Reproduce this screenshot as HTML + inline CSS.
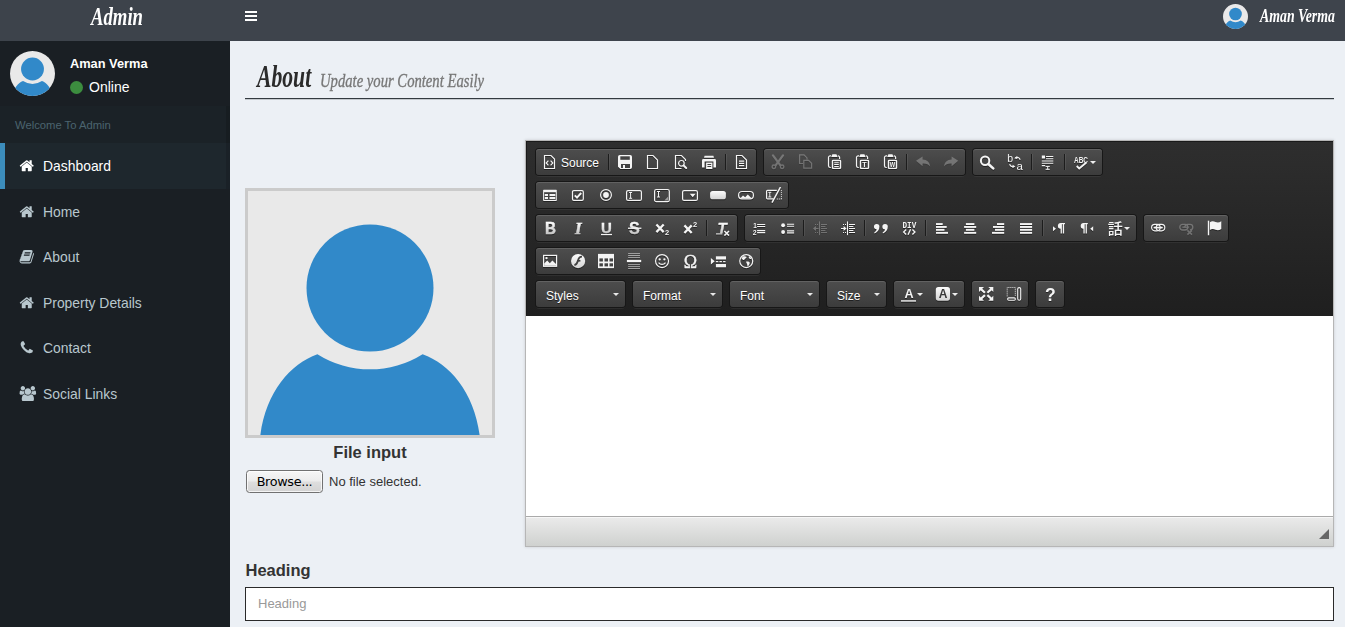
<!DOCTYPE html>
<html lang="en"><head><meta charset="utf-8"><title>Admin | About</title>
<style>
*{box-sizing:border-box}
html,body{margin:0;padding:0}
body{width:1345px;height:627px;overflow:hidden;background:#ecf0f5;font-family:"Liberation Sans",sans-serif;position:relative;color:#333}
.abs{position:absolute}
#hdr{left:0;top:0;width:1345px;height:41px;background:#3e444c}
#logo{left:0;top:0;width:230px;height:41px;background:#3d434b;color:#fff}
.script{font-family:"Liberation Serif","DejaVu Serif",serif;font-style:italic;font-weight:bold;white-space:nowrap;transform-origin:0 100%;display:inline-block;line-height:1}
#side{left:0;top:41px;width:230px;height:586px;background:#1a1f24}
#welcome{left:0;top:106px;width:230px;height:37px;background:#1b2227;color:#4b646f;font-size:11.250px;padding:13px 0 0 15px}
.mi{position:absolute;left:0;width:230px;height:46px;color:#b8c7ce;font-size:13.900px;line-height:46px;padding-left:43px;white-space:nowrap}
.mi.act{background:#1e272d;color:#fff;border-left:5px solid #3c8dbc;padding-left:38px}
.mi .fa{position:absolute;left:19.200px;top:14.800px}
.mi.act .fa{left:14.200px}
#uname{left:70px;top:56px;color:#fff;font-weight:bold;font-size:12.800px;white-space:nowrap}
#online{left:89px;top:79px;color:#fff;font-size:14px;white-space:nowrap}
#dot{left:70px;top:81px;width:13px;height:13px;border-radius:50%;background:#3c8d3f}
#hline{left:245px;top:98px;width:1089px;height:1px;background:#333a40;box-shadow:0 1px 0 rgba(51,58,64,.22)}
#imgbox{left:245px;top:188px;width:250px;height:250px;border:3px solid #cbcbcb;background:#e9e9e9;overflow:hidden}
#filelbl{left:245px;top:443px;width:250px;text-align:center;font-weight:bold;font-size:16.500px;color:#333;white-space:nowrap}
#browse{left:246px;top:470px;width:77px;height:23px;border:1px solid #717171;border-radius:3.500px;background:linear-gradient(#f6f6f6,#ececec 47%,#dedede 53%,#d3d3d3);box-shadow:inset 0 0 0 1px rgba(255,255,255,.75);font-family:"DejaVu Sans","Liberation Sans",sans-serif;font-size:12.800px;color:#000;text-align:center;line-height:22.500px;letter-spacing:-.35px}
#nofile{left:329px;top:474px;font-size:13px;color:#333;white-space:nowrap}
#hlabel{left:245.500px;top:560.500px;font-weight:bold;font-size:16.500px;color:#333;white-space:nowrap}
#hinput{left:245px;top:587px;width:1089px;height:34px;border:1px solid #2a2a2a;background:#fff;color:#999;font-size:13px;line-height:32px;padding-left:12px}
#ed{left:525px;top:140px;width:809px;height:407px;border:1px solid #b6b6b6;background:#fff;box-shadow:0 0 3px rgba(0,0,0,.15)}
#tb{position:absolute;left:0;top:0;width:807px;height:175px;background:linear-gradient(#2e2e2e,#1f1f1f);box-shadow:inset 1px 1px 0 #1a1a1a}
#bot{position:absolute;left:0;top:375px;width:807px;height:30px;border-top:1px solid #aaa;background:linear-gradient(#ebebeb,#cfd1cf);box-shadow:inset 0 1px 0 rgba(255,255,255,.6)}
#rs{position:absolute;right:4px;bottom:7px;width:0;height:0;border-style:solid;border-width:0 0 10px 10px;border-color:transparent transparent #666 transparent}
.g{position:absolute;height:26px;background:linear-gradient(#4d4d4d,#3c3c3c);border-radius:3px;box-shadow:0 0 0 1px #171717,0 2px 0 0 rgba(255,255,255,.06), inset 0 1px 0 rgba(255,255,255,.12);white-space:nowrap;font-size:0;display:flex}
.b{display:inline-block;width:28px;height:26px;padding:5px 6px;position:relative;flex:none}
.b.lbl{width:70px}
.b.arr{width:35px}
.b .t{position:absolute;left:25px;top:6px;font:12px/16px "Liberation Sans",sans-serif;color:#fff;text-shadow:0 1px 0 rgba(0,0,0,.5)}
.ic{display:block;filter:drop-shadow(0 1px 0 rgba(0,0,0,.45))}
.sep{display:inline-block;width:1px;height:16px;margin:5px 2px 0;background:#1c1c1c;box-shadow:1px 0 0 rgba(255,255,255,.08);flex:none}
.ar{position:absolute;width:0;height:0;border:3px solid transparent;border-top-color:#eee;right:6px;top:12px}
.combo .ct{position:absolute;left:10px;top:7px;font:12px/16px "Liberation Sans",sans-serif;color:#fff;text-shadow:0 1px 0 rgba(0,0,0,.5)}
.combo .ar{right:6px;top:11.500px;border-width:3.500px;border-top-color:#e8e8e8}
</style></head><body>
<svg width="0" height="0" style="position:absolute"><defs><linearGradient id="bg1" x1="0" y1="0" x2="0" y2="1"><stop offset="0" stop-color="#fcfcfc"/><stop offset="1" stop-color="#d4d4d4"/></linearGradient><linearGradient id="bg2" gradientUnits="userSpaceOnUse" x1="0" y1="2" x2="0" y2="14"><stop offset="0" stop-color="#ffffff"/><stop offset="1" stop-color="#c4c4c4"/></linearGradient></defs></svg>
<div id="hdr" class="abs"></div>
<div id="logo" class="abs"><span class="script abs" id="logot" style="left:91px;top:4.200px;font-size:26px;color:#fff;transform:scaleX(.72)">Admin</span></div>
<svg class="abs" style="left:245px;top:11px" width="12" height="10" viewBox="0 0 12 10" shape-rendering="crispEdges"><path d="M0 1h12M0 5h12M0 9h12" stroke="#fff" stroke-width="2"/></svg>
<div class="abs" style="left:1223px;top:4px;width:25px;height:25px"><svg class="" width="25" height="25" viewBox="0 0 250 250"><defs><clipPath id="c25"><circle cx="125" cy="125" r="125"/></clipPath></defs><g clip-path="url(#c25)"><rect width="250" height="250" fill="#e9e9e9"/><circle cx="125" cy="100" r="63.500" fill="#3189c9"/><path d="M15 250C20 205 45 176 72.400 166.200A98.800 98.800 0 0 0 177.600 166.200C205 176 230 205 235 250z" fill="#3189c9"/></g></svg></div>
<span class="script abs" id="topname" style="left:1259.500px;top:7px;font-size:18.800px;color:#fff;transform:scaleX(.736)">Aman Verma</span>

<div id="side" class="abs"></div>
<div class="abs" style="left:10px;top:51px;width:45px;height:45px"><svg class="" width="45" height="45" viewBox="0 0 250 250"><defs><clipPath id="c45"><circle cx="125" cy="125" r="125"/></clipPath></defs><g clip-path="url(#c45)"><rect width="250" height="250" fill="#e9e9e9"/><circle cx="125" cy="100" r="63.500" fill="#3189c9"/><path d="M15 250C20 205 45 176 72.400 166.200A98.800 98.800 0 0 0 177.600 166.200C205 176 230 205 235 250z" fill="#3189c9"/></g></svg></div>
<div id="uname" class="abs">Aman Verma</div>
<div id="dot" class="abs"></div>
<div id="online" class="abs">Online</div>
<div id="welcome" class="abs">Welcome To Admin</div>
<div class="mi act" style="top:143px"><svg class="fa" viewBox="0 0 1792 1792" width="15.50" height="15.5" fill="#fff"><path d="M1472 992v480q0 26-19 45t-45 19h-384v-384h-256v384h-384q-26 0-45-19t-19-45v-480q0-1 .5-3t.5-3l575-474 575 474q1 2 1 6zm223-69l-62 74q-8 9-21 11h-3q-13 0-21-7l-692-577-692 577q-12 8-24 7-13-2-21-11l-62-74q-8-10-7-23.500t11-21.500l719-599q32-26 76-26t76 26l244 204v-195q0-14 9-23t23-9h192q14 0 23 9t9 23v408l219 182q10 8 11 21.500t-7 23.500z"/></svg><span>Dashboard</span></div>
<div class="mi" style="top:189px"><svg class="fa" viewBox="0 0 1792 1792" width="15.50" height="15.5" fill="#b8c7ce"><path d="M1472 992v480q0 26-19 45t-45 19h-384v-384h-256v384h-384q-26 0-45-19t-19-45v-480q0-1 .5-3t.5-3l575-474 575 474q1 2 1 6zm223-69l-62 74q-8 9-21 11h-3q-13 0-21-7l-692-577-692 577q-12 8-24 7-13-2-21-11l-62-74q-8-10-7-23.500t11-21.500l719-599q32-26 76-26t76 26l244 204v-195q0-14 9-23t23-9h192q14 0 23 9t9 23v408l219 182q10 8 11 21.500t-7 23.500z"/></svg><span>Home</span></div>
<div class="mi" style="top:234px"><svg class="fa" viewBox="0 0 1792 1792" width="15.50" height="15.5" fill="#b8c7ce"><path d="M1703 478q40 57 18 129l-275 906q-19 64-76.500 107.500t-122.500 43.500h-923q-77 0-148.500-53.500t-99.500-131.500q-24-67-2-127 0-4 3-27t4-37q1-8-3-21.500t-3-19.500q2-11 8-21t16.500-23.500 16.500-23.500q23-38 45-91.500t30-91.500q3-10 .5-30t-.5-28q3-11 17-28t17-23q21-36 42-92t25-90q1-9-2.500-32t.5-28q4-13 22-30.500t22-22.500q19-26 42.500-84.500t27.500-96.500q1-8-3-25.500t-2-26.500q2-8 9-18t18-23 17-21q8-12 16.500-30.500t15-35 16-36 19.500-32 26.500-23.500 36-11.500 47.500 5.500l-1 3q38-9 51-9h761q74 0 114 56t18 130l-274 906q-36 119-71.500 153.500t-128.500 34.500h-869q-27 0-38 15-11 16-1 43 24 70 144 70h923q29 0 56-15.500t35-41.500l300-987q7-22 5-57 38 15 59 43zm-1064 2q-4 13 2 22.500t20 9.500h608q13 0 25.500-9.500t16.500-22.500l21-64q4-13-2-22.500t-20-9.500h-608q-13 0-25.500 9.500t-16.500 22.500zm-83 256q-4 13 2 22.500t20 9.500h608q13 0 25.500-9.500t16.500-22.500l21-64q4-13-2-22.500t-20-9.500h-608q-13 0-25.500 9.500t-16.500 22.500z"/></svg><span>About</span></div>
<div class="mi" style="top:280px"><svg class="fa" viewBox="0 0 1792 1792" width="15.50" height="15.5" fill="#b8c7ce"><path d="M1472 992v480q0 26-19 45t-45 19h-384v-384h-256v384h-384q-26 0-45-19t-19-45v-480q0-1 .5-3t.5-3l575-474 575 474q1 2 1 6zm223-69l-62 74q-8 9-21 11h-3q-13 0-21-7l-692-577-692 577q-12 8-24 7-13-2-21-11l-62-74q-8-10-7-23.500t11-21.500l719-599q32-26 76-26t76 26l244 204v-195q0-14 9-23t23-9h192q14 0 23 9t9 23v408l219 182q10 8 11 21.500t-7 23.500z"/></svg><span>Property Details</span></div>
<div class="mi" style="top:325px"><svg class="fa" viewBox="0 0 1792 1792" width="15.50" height="15.5" fill="#b8c7ce"><path d="M1600 1240q0 27-10 70.500t-21 68.500q-21 50-122 106-94 51-186 51-27 0-53-3.500t-57.500-12.500-47-14.500-55.500-20.500-49-18q-98-35-175-83-127-79-264-216t-216-264q-48-77-83-175-3-9-18-49t-20.500-55.500-14.500-47-12.500-57.500-3.500-53q0-92 51-186 56-101 106-122 25-11 68.500-21t70.500-10q14 0 21 3 18 6 53 76 11 19 30 54t35 63.500 31 53.500q3 4 17.500 25t21.500 35.500 7 28.500q0 20-28.500 50t-62 55-62 53-28.500 46q0 9 5 22.500t8.500 20.500 14 24 11.500 19q76 137 174 235t235 174q2 1 19 11.500t24 14 20.500 8.500 22.500 5q18 0 46-28.500t53-62 55-62 50-28.500q14 0 28.500 7t35.500 21.500 25 17.500q25 15 53.500 31t63.500 35 54 30q70 35 76 53 3 7 3 21z"/></svg><span>Contact</span></div>
<div class="mi" style="top:371px"><svg class="fa" viewBox="0 0 2048 1792" width="17.71" height="15.5" fill="#b8c7ce"><path d="M657 896q-162 5-265 128h-134q-82 0-138-40.500t-56-118.500q0-353 124-353 6 0 43.500 21t97.500 42.500 119 21.500q67 0 133-23-5 37-5 66 0 139 81 256zm1071 637q0 120-73 189.500t-194 69.500h-874q-121 0-194-69.500t-73-189.500q0-53 3.500-103.500t14-109 26.500-108.500 43-97.500 62-81 85.500-53.500 111.500-20q10 0 43 21.500t73 48 107 48 135 21.500 135-21.500 107-48 73-48 43-21.500q61 0 111.500 20t85.500 53.500 62 81 43 97.500 26.500 108.500 14 109 3.500 103.500zm-1024-1277q0 106-75 181t-181 75-181-75-75-181 75-181 181-75 181 75 75 181zm704 384q0 159-112.500 271.500t-271.500 112.500-271.500-112.500-112.500-271.500 112.500-271.500 271.500-112.500 271.500 112.500 112.500 271.500zm576 225q0 78-56 118.500t-138 40.500h-134q-103-123-265-128 81-117 81-256 0-29-5-66 66 23 133 23 59 0 119-21.500t97.500-42.500 43.500-21q124 0 124 353zm-128-609q0 106-75 181t-181 75-181-75-75-181 75-181 181-75 181 75 75 181z"/></svg><span>Social Links</span></div>
<div class="abs" style="left:226px;top:106px;width:4px;height:83px;background:rgba(0,0,0,.13)"></div>
<span class="script abs" id="ttl" style="left:257px;top:60px;font-size:32px;color:#2b2b2b;transform:scaleX(.677)">About</span>
<span class="script abs" id="sub" style="left:320px;top:70.700px;font-size:19.400px;color:#777;font-weight:normal;-webkit-text-stroke:.35px #777;transform:scaleX(.756)">Update your Content Easily</span>
<div id="hline" class="abs"></div>

<div id="imgbox" class="abs"><svg width="244" height="244" viewBox="3 3 244 244"><circle cx="125" cy="100" r="63.500" fill="#3189c9"/><path d="M15 250C20 205 45 176 72.400 166.200A98.800 98.800 0 0 0 177.600 166.200C205 176 230 205 235 250z" fill="#3189c9"/></svg></div>
<div id="filelbl" class="abs">File input</div>
<div id="browse" class="abs">Browse...</div>
<div id="nofile" class="abs">No file selected.</div>

<div id="ed" class="abs"><div id="tb">
<div class="g" style="left:10px;top:8px"><span class="b lbl"><svg class="ic" viewBox="0 0 16 16" width="16" height="16"><path d="M2.5 1.5h6.5l3.5 3.5v9.5h-10z" fill="none" stroke="#f4f4f4" stroke-width="1.15" stroke-linejoin="miter"/><path d="M6.400 6.600L4.200 9l2.200 2.400M8.600 6.600L10.800 9l-2.200 2.400" fill="none" stroke="#f4f4f4" stroke-width="1.200"/></svg><span class="t">Source</span></span><i class="sep"></i><span class="b"><svg class="ic" viewBox="0 0 16 16" width="16" height="16"><path d="M2.800 1h10.400a1.800 1.800 0 0 1 1.800 1.800v10.400a1.800 1.800 0 0 1-1.800 1.800H3.400L1 12.800V2.800A1.800 1.800 0 0 1 2.800 1z" fill="#f4f4f4"/><rect x="3.300" y="2.300" width="9.500" height="3.500" fill="#424242"/><rect x="4" y="10" width="9" height="4" fill="#424242"/><rect x="6" y="11" width="2" height="3" fill="#f4f4f4"/></svg></span><span class="b"><svg class="ic" viewBox="0 0 16 16" width="16" height="16"><path d="M2.5 1.5h5.5l4.5 4.5v8.5h-10z" fill="none" stroke="#f4f4f4" stroke-width="1.15" stroke-linejoin="miter"/></svg></span><span class="b"><svg class="ic" viewBox="0 0 16 16" width="16" height="16"><path d="M8.500 14.500H2.500V1.500h6l4 4V7" fill="none" stroke="#f4f4f4" stroke-width="1.150"/><circle cx="8.400" cy="9.300" r="2.800" fill="none" stroke="#f4f4f4" stroke-width="1.200"/><path d="M10.600 11.600l2.600 2.400" stroke="#f4f4f4" stroke-width="2" stroke-linecap="round"/></svg></span><span class="b"><svg class="ic" viewBox="0 0 16 16" width="16" height="16"><path d="M3.600 1.700h8.800l.6 2H3z" fill="#f4f4f4"/><path d="M2.400 5h11.200a1.400 1.400 0 0 1 1.400 1.400v7.100h-2.600V7.600H3.600v5.900H1V6.400A1.400 1.400 0 0 1 2.400 5z" fill="#f4f4f4"/><path d="M5.100 8.600h6.300V15H5.100z" fill="#f4f4f4"/><path d="M6.400 10.500h3.800M6.400 12.500h3.800" stroke="#424242" stroke-width="1"/></svg></span><i class="sep"></i><span class="b"><svg class="ic" viewBox="0 0 16 16" width="16" height="16"><path d="M2.5 1.5h5.5l4.5 4.5v8.5h-10z" fill="none" stroke="#f4f4f4" stroke-width="1.15" stroke-linejoin="miter"/><path d="M5 7.100h5.200M5 9.400h5.200M5 11.600h5.200" stroke="#f4f4f4" stroke-width="1.300"/></svg></span></div>
<div class="g" style="left:238px;top:8px"><span class="b"><svg class="ic" viewBox="0 0 16 16" width="16" height="16" style="opacity:.27"><path d="M3 1.400l7 9.400M13 1.400L6 10.800" stroke="#f4f4f4" stroke-width="2.200" stroke-linecap="round"/><circle cx="3.900" cy="12.800" r="1.800" fill="none" stroke="#f4f4f4" stroke-width="1.300"/><circle cx="12.100" cy="12.800" r="1.800" fill="none" stroke="#f4f4f4" stroke-width="1.300"/></svg></span><span class="b"><svg class="ic" viewBox="0 0 16 16" width="16" height="16" style="opacity:.27"><path d="M5 9.500H1.600V0.900h4.400l3 3v1.800" fill="none" stroke="#f4f4f4" stroke-width="1.200"/><path d="M5.800 6.300h4.800l3 3v4.900H5.800z" fill="none" stroke="#f4f4f4" stroke-width="1.200"/></svg></span><span class="b"><svg class="ic" viewBox="0 0 16 16" width="16" height="16"><path d="M5 1.900H4.200A1.700 1.700 0 0 0 2.500 3.600v8.200a1.700 1.700 0 0 0 1.700 1.700h.6M11.800 1.900h.3a1.500 1.500 0 0 1 1.500 1.500V5" fill="none" stroke="#f4f4f4" stroke-width="1.200"/><path d="M6.400 0.300h4l1.200 2.700H5.200z" fill="#f4f4f4"/><rect x="6.500" y="6.400" width="8" height="8" rx="0.600" fill="none" stroke="#f4f4f4" stroke-width="1.400"/><path d="M8.200 8.300h4.600M8.200 10.400h4.600M8.200 12.500h4.600" stroke="#f4f4f4" stroke-width="1.100"/></svg></span><span class="b"><svg class="ic" viewBox="0 0 16 16" width="16" height="16"><path d="M5 1.900H4.200A1.700 1.700 0 0 0 2.500 3.600v8.200a1.700 1.700 0 0 0 1.700 1.700h.6M11.800 1.900h.3a1.500 1.500 0 0 1 1.500 1.500V5" fill="none" stroke="#f4f4f4" stroke-width="1.200"/><path d="M6.400 0.300h4l1.200 2.700H5.200z" fill="#f4f4f4"/><rect x="6.500" y="6.400" width="8" height="8" rx="0.600" fill="none" stroke="#f4f4f4" stroke-width="1.400"/><text x="10.5" y="13.2" font-family="Liberation Sans, sans-serif" font-weight="bold" font-style="normal" font-size="7.2" text-anchor="middle" fill="#f4f4f4">T</text></svg></span><span class="b"><svg class="ic" viewBox="0 0 16 16" width="16" height="16"><path d="M5 1.900H4.200A1.700 1.700 0 0 0 2.500 3.600v8.200a1.700 1.700 0 0 0 1.700 1.700h.6M11.800 1.900h.3a1.500 1.500 0 0 1 1.500 1.500V5" fill="none" stroke="#f4f4f4" stroke-width="1.200"/><path d="M6.400 0.300h4l1.200 2.700H5.200z" fill="#f4f4f4"/><rect x="6.500" y="6.400" width="8" height="8" rx="0.600" fill="none" stroke="#f4f4f4" stroke-width="1.400"/><text x="10.5" y="13.1" font-family="Liberation Sans, sans-serif" font-weight="bold" font-style="normal" font-size="6.6" text-anchor="middle" fill="#f4f4f4" textLength="5.400" lengthAdjust="spacingAndGlyphs">W</text></svg></span><i class="sep"></i><span class="b"><svg class="ic" viewBox="0 0 16 16" width="16" height="16" style="opacity:.27"><path d="M1 6.800L7.600 2.600v2.800c4.400.2 7.200 2.600 7.600 7.200-1.600-2.400-4-3.400-7.600-3.200v2.800z" fill="#f4f4f4"/></svg></span><span class="b"><svg class="ic" viewBox="0 0 16 16" width="16" height="16" style="opacity:.27"><path d="M15.200 6.800L8.600 2.600v2.800c-4.400.2-7.200 2.600-7.600 7.200 1.600-2.400 4-3.400 7.600-3.200v2.800z" fill="#f4f4f4"/></svg></span></div>
<div class="g" style="left:447px;top:8px"><span class="b"><svg class="ic" viewBox="0 0 16 16" width="16" height="16"><circle cx="6.100" cy="6.700" r="4.200" fill="none" stroke="#f4f4f4" stroke-width="2"/><path d="M9.600 10.200l4.600 4.200" stroke="#f4f4f4" stroke-width="2.600" stroke-linecap="round"/></svg></span><span class="b"><svg class="ic" viewBox="0 0 16 16" width="16" height="16"><text x="3.2" y="8" font-family="Liberation Sans, sans-serif" font-weight="normal" font-style="normal" font-size="10.5" text-anchor="middle" fill="#f4f4f4">b</text><text x="12.8" y="15.7" font-family="Liberation Sans, sans-serif" font-weight="normal" font-style="normal" font-size="11.5" text-anchor="middle" fill="#f4f4f4">a</text><path d="M8.200 3.800c2.200-1 4.200-.2 5 2" fill="none" stroke="#f4f4f4" stroke-width="1.100"/><path d="M7.200 4.200l3-2.200.2 3z" fill="#f4f4f4"/><path d="M2.600 10.200c.6 2 2.400 2.800 4.400 2.400" fill="none" stroke="#f4f4f4" stroke-width="1.100"/><path d="M8.400 12.600l-2.800-1.800-.2 3.200z" fill="#f4f4f4"/></svg></span><i class="sep"></i><span class="b"><svg class="ic" viewBox="0 0 16 16" width="16" height="16"><rect x="1.800" y="1.500" width="3.200" height="3" fill="#f4f4f4"/><path d="M6 2.500h7.300M6 4.800h7.300M1.800 7h11.500M1.800 9.300h11.500M1.800 11.600h3.400" stroke="#f4f4f4" stroke-width="1.100"/><path d="M5.600 12.400h4.200M5.600 15.300h4.200M7.700 12.400v3" stroke="#f4f4f4" stroke-width="1"/></svg></span><i class="sep"></i><span class="b arr"><svg class="ic" viewBox="0 0 16 16" width="16" height="16"><text x="1" y="9" font-family="Liberation Sans, sans-serif" font-weight="bold" font-size="9.500" textLength="14" lengthAdjust="spacingAndGlyphs" fill="#f4f4f4">ABC</text><path d="M3.700 12l2.500 2.500 7.200-6" fill="none" stroke="#f4f4f4" stroke-width="1.800"/></svg><i class="ar"></i></span></div>
<div class="g" style="left:10px;top:41px"><span class="b"><svg class="ic" viewBox="0 0 16 16" width="16" height="16"><rect x="1.100" y="2.800" width="13.700" height="11.100" rx="0.600" fill="#f4f4f4"/><rect x="2.100" y="5.200" width="11.700" height="7.700" fill="#424242"/><path d="M2.800 8h3.200M7.500 8h5.800M2.800 11h3.200M7.500 11h5.800" stroke="#f4f4f4" stroke-width="2"/></svg></span><span class="b"><svg class="ic" viewBox="0 0 16 16" width="16" height="16"><rect x="2.500" y="3.600" width="10.800" height="9.800" rx="1.300" fill="none" stroke="#f4f4f4" stroke-width="1.200"/><path d="M4.800 8.400l2.200 2.200 4.200-4.600" fill="none" stroke="#f4f4f4" stroke-width="2"/></svg></span><span class="b"><svg class="ic" viewBox="0 0 16 16" width="16" height="16"><circle cx="8" cy="8" r="5.400" fill="none" stroke="#f4f4f4" stroke-width="1.200"/><circle cx="8" cy="8" r="2.900" fill="#f4f4f4"/></svg></span><span class="b"><svg class="ic" viewBox="0 0 16 16" width="16" height="16"><rect x="0.600" y="3.600" width="14.800" height="9.800" rx="1.500" fill="none" stroke="#f4f4f4" stroke-width="1.200"/><path d="M4.6 5.5V11.3M3.0999999999999996 5.5h3M3.0999999999999996 11.3h3" stroke="#f4f4f4" stroke-width="1"/></svg></span><span class="b"><svg class="ic" viewBox="0 0 16 16" width="16" height="16"><rect x="0.600" y="2.500" width="14.700" height="12.200" rx="1.800" fill="none" stroke="#f4f4f4" stroke-width="1.200"/><path d="M4.5 4.5V10M3.0 4.5h3M3.0 10h3" stroke="#f4f4f4" stroke-width="1"/><path d="M14 9.800v3.600h-3.600z" fill="#f4f4f4" opacity="0.550"/></svg></span><span class="b"><svg class="ic" viewBox="0 0 16 16" width="16" height="16"><rect x="0.600" y="3.600" width="14.800" height="9.800" rx="1.500" fill="none" stroke="#f4f4f4" stroke-width="1.200"/><path d="M7.800 6.700h5.800l-2.900 3.600z" fill="#f4f4f4"/></svg></span><span class="b"><svg class="ic" viewBox="0 0 16 16" width="16" height="16"><rect x="0.100" y="3.900" width="15.800" height="8.400" rx="2.600" fill="url(#bg1)"/></svg></span><span class="b"><svg class="ic" viewBox="0 0 16 16" width="16" height="16"><rect x="0.600" y="4.500" width="14.800" height="7.400" rx="3.400" fill="none" stroke="#f4f4f4" stroke-width="1.200"/><path d="M2.200 11.400l2.800-3 2.200 1.800 2.600-2.600 4 3.800z" fill="#f4f4f4"/></svg></span><span class="b"><svg class="ic" viewBox="0 0 16 16" width="16" height="16"><path d="M10.800 3.400H1.500a.9.900 0 0 0-.9.900v6.700a.9.900 0 0 0 .9.900h6" fill="none" stroke="#f4f4f4" stroke-width="1.200"/><path d="M3.8 5.3V10M2.3 5.3h3M2.3 10h3" stroke="#f4f4f4" stroke-width="1"/><path d="M14.500 0L6 15.600" stroke="#f4f4f4" stroke-width="1.500"/><path d="M10.800 12h4.600M15.400 3.200v9" stroke="#f4f4f4" stroke-width="1" stroke-dasharray="1 1"/></svg></span></div>
<div class="g" style="left:10px;top:74px"><span class="b"><svg class="ic" viewBox="0 0 16 16" width="16" height="16"><text x="8.4" y="13.9" font-family="Liberation Sans, sans-serif" font-weight="bold" font-style="normal" font-size="16.2" text-anchor="middle" fill="url(#bg2)" textLength="11" lengthAdjust="spacingAndGlyphs" stroke="url(#bg2)" stroke-width=".5">B</text></svg></span><span class="b"><svg class="ic" viewBox="0 0 16 16" width="16" height="16"><text x="8.2" y="13.9" font-family="Liberation Serif, serif" font-weight="bold" font-style="italic" font-size="17" text-anchor="middle" fill="url(#bg2)" stroke="url(#bg2)" stroke-width=".5">I</text></svg></span><span class="b"><svg class="ic" viewBox="0 0 16 16" width="16" height="16"><text x="8.3" y="12.5" font-family="Liberation Sans, sans-serif" font-weight="bold" font-style="normal" font-size="15" text-anchor="middle" fill="url(#bg2)" stroke="url(#bg2)" stroke-width=".3">U</text><rect x="3" y="13.900" width="11" height="1.300" fill="#f4f4f4"/></svg></span><span class="b"><svg class="ic" viewBox="0 0 16 16" width="16" height="16"><text x="8.4" y="13.9" font-family="Liberation Sans, sans-serif" font-weight="bold" font-style="normal" font-size="16.2" text-anchor="middle" fill="url(#bg2)" stroke="url(#bg2)" stroke-width=".3">S</text><rect x="2" y="7.600" width="13.400" height="1.300" fill="#f4f4f4"/></svg></span><span class="b"><svg class="ic" viewBox="0 0 16 16" width="16" height="16"><path d="M2.400 4.500l7.300 7.600M9.700 4.500L2.400 12.100" stroke="#f4f4f4" stroke-width="2.300"/><text x="13" y="15.2" font-family="Liberation Sans, sans-serif" font-weight="bold" font-style="normal" font-size="7.5" text-anchor="middle" fill="#f4f4f4">2</text></svg></span><span class="b"><svg class="ic" viewBox="0 0 16 16" width="16" height="16"><path d="M2.400 5.400l7.300 7.600M9.700 5.400L2.400 13" stroke="#f4f4f4" stroke-width="2.300"/><text x="13" y="7.4" font-family="Liberation Sans, sans-serif" font-weight="bold" font-style="normal" font-size="7.5" text-anchor="middle" fill="#f4f4f4">2</text></svg></span><i class="sep"></i><span class="b"><svg class="ic" viewBox="0 0 16 16" width="16" height="16"><text x="7" y="12.5" font-family="Liberation Sans, sans-serif" font-weight="bold" font-style="italic" font-size="15" text-anchor="middle" fill="url(#bg2)" stroke="url(#bg2)" stroke-width=".35">T</text><rect x="1" y="13.400" width="6.400" height="1" fill="#f4f4f4"/><path d="M9.400 11l4.600 4.600M14 11l-4.600 4.600" stroke="#f4f4f4" stroke-width="1.500"/></svg></span></div>
<div class="g" style="left:219px;top:74px"><span class="b"><svg class="ic" viewBox="0 0 16 16" width="16" height="16"><text x="4" y="7.6" font-family="Liberation Sans, sans-serif" font-weight="bold" font-style="normal" font-size="6.4" text-anchor="middle" fill="#f4f4f4">1</text><text x="3.6" y="14.7" font-family="Liberation Sans, sans-serif" font-weight="bold" font-style="normal" font-size="6.8" text-anchor="middle" fill="#f4f4f4">2</text><path d="M6.100 4.500h8.100M6.100 6.500h8.100M6.100 10.600h8.100M6.100 12.600h8.100" stroke="#f4f4f4" stroke-width="1.100"/></svg></span><span class="b"><svg class="ic" viewBox="0 0 16 16" width="16" height="16"><circle cx="4.100" cy="5.300" r="1.950" fill="#f4f4f4"/><circle cx="4.100" cy="12" r="1.950" fill="#f4f4f4"/><path d="M8 4.300h7.100M8 6.300h7.100M8 10.900h7.100M8 12.900h7.100" stroke="#f4f4f4" stroke-width="1.100"/></svg></span><i class="sep"></i><span class="b"><svg class="ic" viewBox="0 0 16 16" width="16" height="16" style="opacity:.27"><path d="M7.500 1.400v13.800" stroke="#f4f4f4" stroke-width="1"/><path d="M9 4.500h6M9 6.500h4.400M9 8.500h6M9 10.500h4.400M9 12.500h6" stroke="#f4f4f4" stroke-width="1.100"/><path d="M3 4.500h4M3 12.500h4" stroke="#f4f4f4" stroke-width="1" stroke-dasharray="1 1"/><path d="M1 8.500l3-2.400v1.800h2.600v1.200H4v1.800z" fill="#f4f4f4"/></svg></span><span class="b"><svg class="ic" viewBox="0 0 16 16" width="16" height="16"><path d="M7.500 1.400v13.800" stroke="#f4f4f4" stroke-width="1"/><path d="M9 4.500h6M9 6.500h4.400M9 8.500h6M9 10.500h4.400M9 12.500h6" stroke="#f4f4f4" stroke-width="1.100"/><path d="M3 4.500h4M3 12.500h4" stroke="#f4f4f4" stroke-width="1" stroke-dasharray="1 1"/><path d="M6.600 8.500l-3-2.400v1.800H1v1.200h2.600v1.800z" fill="#f4f4f4"/></svg></span><i class="sep"></i><span class="b"><svg class="ic" viewBox="0 0 16 16" width="16" height="16"><path d="M3.6999999999999997 3.900a2.700 2.700 0 0 1 2.700 2.900c0 3-1.800 5.400-4.800 6.600l-.4-.9c1.400-.8 2.300-1.900 2.400-3.200A2.700 2.700 0 0 1 3.6999999999999997 3.900z" fill="#f4f4f4"/><path d="M12.1 3.900a2.700 2.700 0 0 1 2.700 2.900c0 3-1.800 5.400-4.800 6.600l-.4-.9c1.400-.8 2.300-1.900 2.400-3.200A2.700 2.700 0 0 1 12.1 3.900z" fill="#f4f4f4"/></svg></span><span class="b"><svg class="ic" viewBox="0 0 16 16" width="16" height="16"><text x="8.400" y="7.600" font-family="Liberation Mono, monospace" font-weight="bold" font-size="9" textLength="13.800" lengthAdjust="spacingAndGlyphs" text-anchor="middle" fill="#f4f4f4">DIV</text><path d="M5.200 9.600l-2.500 2.400 2.500 2.400M11.400 9.600l2.500 2.400-2.500 2.400M9.600 9.200l-2.600 5.600" fill="none" stroke="#f4f4f4" stroke-width="1.400"/></svg></span><i class="sep"></i><span class="b"><svg class="ic" viewBox="0 0 16 16" width="16" height="16"><rect x="2" y="3.1" width="6.699999999999999" height="1.900" fill="#f4f4f4"/><rect x="2" y="6" width="10.7" height="1.900" fill="#f4f4f4"/><rect x="2" y="8.9" width="8.5" height="1.900" fill="#f4f4f4"/><rect x="2" y="11.9" width="12" height="1.900" fill="#f4f4f4"/></svg></span><span class="b"><svg class="ic" viewBox="0 0 16 16" width="16" height="16"><rect x="3.9" y="3.1" width="8.5" height="1.900" fill="#f4f4f4"/><rect x="2.1" y="6" width="12.1" height="1.900" fill="#f4f4f4"/><rect x="3.9" y="8.9" width="8.5" height="1.900" fill="#f4f4f4"/><rect x="2.1" y="11.9" width="12.1" height="1.900" fill="#f4f4f4"/></svg></span><span class="b"><svg class="ic" viewBox="0 0 16 16" width="16" height="16"><rect x="7" y="3.1" width="7.199999999999999" height="1.900" fill="#f4f4f4"/><rect x="3" y="6" width="11.2" height="1.900" fill="#f4f4f4"/><rect x="5" y="8.9" width="9.2" height="1.900" fill="#f4f4f4"/><rect x="2" y="11.9" width="12.2" height="1.900" fill="#f4f4f4"/></svg></span><span class="b"><svg class="ic" viewBox="0 0 16 16" width="16" height="16"><rect x="2" y="3.1" width="12.1" height="1.900" fill="#f4f4f4"/><rect x="2" y="6" width="12.1" height="1.900" fill="#f4f4f4"/><rect x="2" y="8.9" width="12.1" height="1.900" fill="#f4f4f4"/><rect x="2" y="11.9" width="12.1" height="1.900" fill="#f4f4f4"/></svg></span><i class="sep"></i><span class="b"><svg class="ic" viewBox="0 0 16 16" width="16" height="16"><path d="M10.0 3h4v1.200h-.9v9.200h-1.300V4.200h-.9v9.200h-1.300V8.800a2.900 2.900 0 0 1 .4-5.800z" fill="#f4f4f4"/><path d="M2 6.300l3 2.500-3 2.500z" fill="#f4f4f4"/></svg></span><span class="b"><svg class="ic" viewBox="0 0 16 16" width="16" height="16"><path d="M4.8 3h4v1.200h-.9v9.200h-1.300V4.200h-.9v9.200h-1.300V8.800a2.900 2.900 0 0 1 .4-5.800z" fill="#f4f4f4"/><path d="M14.200 6.300l-3 2.500 3 2.500z" fill="#f4f4f4"/></svg></span><span class="b arr"><svg class="ic" viewBox="0 0 16 16" width="16" height="16"><text x="8.350" y="14" font-family="Noto Sans CJK JP, Noto Sans CJK SC, sans-serif" font-weight="500" font-size="15" text-anchor="middle" fill="#f4f4f4">話</text></svg><i class="ar"></i></span></div>
<div class="g" style="left:618px;top:74px"><span class="b"><svg class="ic" viewBox="0 0 16 16" width="16" height="16"><rect x="1.600" y="4.400" width="8.600" height="6.400" rx="3.200" fill="none" stroke="#f4f4f4" stroke-width="1.150"/><rect x="6.200" y="4.400" width="8.600" height="6.400" rx="3.200" fill="none" stroke="#f4f4f4" stroke-width="1.150"/><path d="M4.400 7.600h7.600" stroke="#f4f4f4" stroke-width="1.700" stroke-linecap="round"/></svg></span><span class="b"><svg class="ic" viewBox="0 0 16 16" width="16" height="16" style="opacity:.27"><rect x="1.800" y="4.400" width="8" height="5.600" rx="2.800" fill="none" stroke="#f4f4f4" stroke-width="1.300"/><path d="M12 10a2.800 2.800 0 0 0 0-5.600H9.600a2.800 2.800 0 0 0-2.800 2.800" fill="none" stroke="#f4f4f4" stroke-width="1.300"/><path d="M4.400 7.200h6.400" stroke="#f4f4f4" stroke-width="1.300"/><path d="M9.400 10.400l4.600 4.200M14 10.400l-4.600 4.200" stroke="#f4f4f4" stroke-width="1.500"/></svg></span><span class="b"><svg class="ic" viewBox="0 0 16 16" width="16" height="16"><rect x="1.800" y="0.700" width="1.400" height="14.600" fill="#f4f4f4"/><path d="M3.900 2.200c2-1.300 3.600-1 5.600-.2 2 .8 3.800.6 5.800-.8v7.800c-2 1.400-3.800 1.600-5.800.8-2-.8-3.600-1.100-5.600.2z" fill="#f4f4f4"/></svg></span></div>
<div class="g" style="left:10px;top:107px"><span class="b"><svg class="ic" viewBox="0 0 16 16" width="16" height="16"><rect x="1.600" y="2.400" width="13" height="10.900" fill="none" stroke="#f4f4f4" stroke-width="1.200"/><path d="M2.200 12.700V10.600l3-3.200 2.600 2.800 2.600-2.600 3.600 3.400v1.700z" fill="#f4f4f4"/><circle cx="4.500" cy="5.100" r="1.200" fill="#f4f4f4"/></svg></span><span class="b"><svg class="ic" viewBox="0 0 16 16" width="16" height="16"><circle cx="8.100" cy="8.050" r="7.100" fill="url(#bg1)"/><path d="M12 3.600c-2.600 0-3.400 1.600-4 3.800-.6 2.200-1.200 4.200-3.600 4.800" fill="none" stroke="#424242" stroke-width="1.800"/><path d="M7 7.800h3.400" stroke="#424242" stroke-width="1.600"/></svg></span><span class="b"><svg class="ic" viewBox="0 0 16 16" width="16" height="16"><rect x="0" y="0.900" width="16.100" height="14.300" fill="#f4f4f4"/><rect x="1.4" y="5.4" width="3.500" height="3.100" fill="#424242"/><rect x="6.5" y="5.4" width="3.500" height="3.100" fill="#424242"/><rect x="11.5" y="5.4" width="3.500" height="3.100" fill="#424242"/><rect x="1.4" y="10.3" width="3.500" height="3.100" fill="#424242"/><rect x="6.5" y="10.3" width="3.500" height="3.100" fill="#424242"/><rect x="11.5" y="10.3" width="3.500" height="3.100" fill="#424242"/></svg></span><span class="b"><svg class="ic" viewBox="0 0 16 16" width="16" height="16"><path d="M2.100 0.600h11.900M2.100 2.500h11.900M2.100 4.400h11.900M2.100 11.600h11.900M2.100 13.600h11.900M2.100 15.500h11.900" stroke="#f4f4f4" stroke-width="0.900" opacity=".62"/><rect x="0.900" y="6.900" width="14.300" height="2.300" fill="#f4f4f4"/></svg></span><span class="b"><svg class="ic" viewBox="0 0 16 16" width="16" height="16"><circle cx="8.050" cy="8.050" r="6.500" fill="none" stroke="#f4f4f4" stroke-width="1.200"/><circle cx="5.700" cy="6.400" r="1.150" fill="#f4f4f4"/><circle cx="10.400" cy="6.400" r="1.150" fill="#f4f4f4"/><path d="M4.600 9.600c1.600 2.400 5.300 2.400 6.900 0" fill="none" stroke="#f4f4f4" stroke-width="1.200"/></svg></span><span class="b"><svg class="ic" viewBox="0 0 16 16" width="16" height="16"><text x="8.5" y="14.75" font-family="Liberation Serif, serif" font-weight="normal" font-style="normal" font-size="18" text-anchor="middle" fill="#f4f4f4" stroke="#f4f4f4" stroke-width=".35">Ω</text></svg></span><span class="b"><svg class="ic" viewBox="0 0 16 16" width="16" height="16"><path d="M0.900 4.900l3.800 3.300-3.800 3.400z" fill="#f4f4f4"/><rect x="5.900" y="3.300" width="10.400" height="3.200" fill="#f4f4f4"/><rect x="5.900" y="11" width="10.400" height="3.300" fill="#f4f4f4"/><path d="M5.900 8.700h10.400" stroke="#f4f4f4" stroke-width="1.300" stroke-dasharray="2.400 1.200"/></svg></span><span class="b"><svg class="ic" viewBox="0 0 16 16" width="16" height="16"><circle cx="8.250" cy="8.050" r="6.500" fill="none" stroke="#f4f4f4" stroke-width="1.200"/><path d="M4.600 3.800c1.400-.8 2.800-.6 4.200.2-.6 1.400-2 1.400-2.400 2.800-1 .4-2.200-.4-2.800-1.400zM8 8.800c1.400-.6 3.200-.2 3.800 1-.2 1.600-1 2.800-2 3.600-.8-1-.4-2.200-1.200-3.200zM10.800 3c1.200.6 2.200 1.600 2.800 2.800-1 .4-2.200 0-2.800-.8z" fill="#f4f4f4"/></svg></span></div>
<div class="g combo" style="left:10px;top:140px;width:89px"><span class="ct">Styles</span><i class="ar"></i></div>
<div class="g combo" style="left:107px;top:140px;width:89px"><span class="ct">Format</span><i class="ar"></i></div>
<div class="g combo" style="left:204px;top:140px;width:89px"><span class="ct">Font</span><i class="ar"></i></div>
<div class="g combo" style="left:301px;top:140px;width:59px"><span class="ct">Size</span><i class="ar"></i></div>
<div class="g" style="left:368px;top:140px"><span class="b arr"><svg class="ic" viewBox="0 0 16 16" width="16" height="16"><text x="9" y="11.8" font-family="Liberation Sans, sans-serif" font-weight="bold" font-style="normal" font-size="12.6" text-anchor="middle" fill="#f4f4f4">A</text><rect x="1" y="14" width="15" height="1.800" fill="#c8c8c8"/></svg><i class="ar"></i></span><span class="b arr"><svg class="ic" viewBox="0 0 16 16" width="16" height="16"><rect x="0.800" y="1.100" width="14.200" height="13.600" rx="2.600" fill="url(#bg1)"/><text x="8" y="12" font-family="Liberation Sans, sans-serif" font-weight="bold" font-style="normal" font-size="12" text-anchor="middle" fill="#3a3a3a">A</text></svg><i class="ar"></i></span></div>
<div class="g" style="left:446px;top:140px"><span class="b"><svg class="ic" viewBox="0 0 16 16" width="16" height="16"><path d="M6.95 6.70L3.00 3.10" stroke="#f4f4f4" stroke-width="2.200"/><path d="M1.00 1.10L6.00 1.10L1.00 6.10z" fill="#f4f4f4"/><path d="M9.35 6.70L13.30 3.10" stroke="#f4f4f4" stroke-width="2.200"/><path d="M15.30 1.10L10.30 1.10L15.30 6.10z" fill="#f4f4f4"/><path d="M6.95 9.10L3.00 12.70" stroke="#f4f4f4" stroke-width="2.200"/><path d="M1.00 14.70L6.00 14.70L1.00 9.70z" fill="#f4f4f4"/><path d="M9.35 9.10L13.30 12.70" stroke="#f4f4f4" stroke-width="2.200"/><path d="M15.30 14.70L10.30 14.70L15.30 9.70z" fill="#f4f4f4"/></svg></span><span class="b"><svg class="ic" viewBox="0 0 16 16" width="16" height="16"><path d="M1.200 10.400V1.600h8.100v8.800" fill="none" stroke="#f4f4f4" stroke-width="1" stroke-dasharray="1 1"/><rect x="1.600" y="11.900" width="7.800" height="2.300" rx="1.150" fill="none" stroke="#f4f4f4" stroke-width="1.100"/><rect x="11.700" y="1.600" width="3" height="12.600" rx="1.500" fill="none" stroke="#f4f4f4" stroke-width="1.100"/></svg></span></div>
<div class="g" style="left:510px;top:140px"><span class="b"><svg class="ic" viewBox="0 0 16 16" width="16" height="16"><text x="8.4" y="14.7" font-family="Liberation Sans, sans-serif" font-weight="bold" font-style="normal" font-size="17.6" text-anchor="middle" fill="#f4f4f4">?</text></svg></span></div>
</div><div id="bot"><i id="rs"></i></div></div>

<div id="hlabel" class="abs">Heading</div>
<div id="hinput" class="abs">Heading</div>
</body></html>
